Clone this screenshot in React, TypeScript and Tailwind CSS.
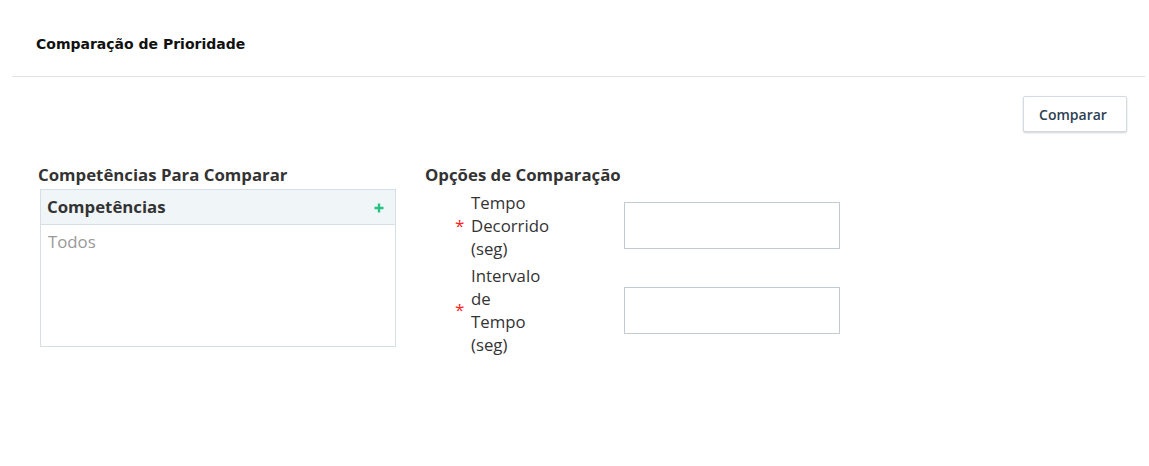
export default function App() {
  return (
    <div className="min-h-[466px] w-full bg-white text-[#333]" style={{ fontFamily: '"Open Sans", sans-serif' }}>
      {/* Page header */}
      <div className="pl-3 pr-1">
        <div className="flex h-[77px] items-center border-b border-[#dfe3e8] pl-6 pt-[12px]">
          <h1
            className="text-[14px] font-bold text-[#111]"
            style={{ fontFamily: '"DejaVu Sans", sans-serif' }}
          >
            Comparação de Prioridade
          </h1>
        </div>
      </div>

      {/* Toolbar */}
      <div className="flex justify-end pr-[22px] pt-[19px]">
        <button className="h-[36px] w-[104px] rounded-[2px] border border-[#d3dae1] bg-white pr-[4px] text-[14px] font-semibold text-[#2c3e50] shadow-[0_1px_2px_rgba(0,0,0,0.18)]">
          Comparar
        </button>
      </div>

      {/* Content */}
      <div className="flex pl-[40px] pt-[31px]">
        {/* Competências */}
        <div className="w-[356px]">
          <h2 className="-ml-[2px] text-[16.8px] font-bold leading-[23px] text-[#333]">Competências Para Comparar</h2>
          <div className="mt-[3px] h-[158px] border border-[#d6dee6]">
            <div className="flex h-[35px] items-center justify-between border-b border-[#d6dee6] bg-[#f0f5f8] pl-[6px] pr-[11px]">
              <span className="text-[16.8px] font-bold text-[#333]">Competências</span>
              <svg width="10" height="10" viewBox="0 0 10 10" className="mt-[2px]">
                <path d="M5 0.5v9M0.5 5h9" stroke="#27c281" strokeWidth="2.4" />
              </svg>
            </div>
            <div className="pl-[7px] pt-[4px] text-[16.8px] text-[#999]">Todos</div>
          </div>
        </div>

        {/* Opções */}
        <div className="ml-[29px]">
          <h2 className="text-[16.8px] font-bold leading-[23px] text-[#333]">Opções de Comparação</h2>
          <div className="mt-[5px] flex flex-col gap-[4px]">
            <div className="flex items-center pl-[30px]">
              <span className="w-[16px] text-[17px] text-[#f22]">*</span>
              <span className="w-[78px] text-[16.8px] leading-[23px] text-[#333]">Tempo Decorrido (seg)</span>
              <input className="ml-[75px] h-[47px] w-[216px] border border-[#c2cad2] bg-white outline-none" />
            </div>
            <div className="flex items-center pl-[30px]">
              <span className="w-[16px] text-[17px] text-[#f22]">*</span>
              <span className="w-[78px] text-[16.8px] leading-[23px] text-[#333]">Intervalo de Tempo (seg)</span>
              <input className="ml-[75px] h-[47px] w-[216px] border border-[#c2cad2] bg-white outline-none" />
            </div>
          </div>
        </div>
      </div>
    </div>
  );
}
